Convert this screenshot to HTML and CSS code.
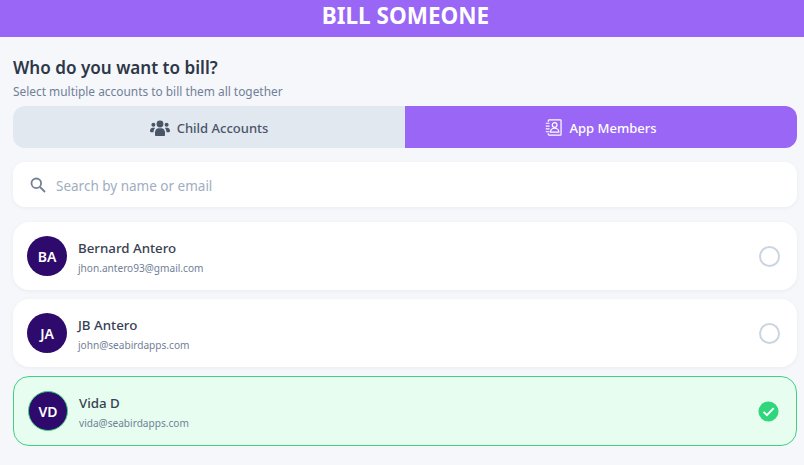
FILE: index.html
```html
<!DOCTYPE html>
<html lang="en">
<head>
  <meta charset="UTF-8">
  <meta name="viewport" content="width=device-width, initial-scale=1.0">
  <title>Bill Someone</title>
  <link rel="stylesheet" href="styles.css">
</head>
<body>
  <header class="top-bar">BILL SOMEONE</header>

  <main class="content">
    <h2 class="title">Who do you want to bill?</h2>
    <p class="subtitle">Select multiple accounts to bill them all together</p>

    <!-- Tabs -->
    <div class="tabs">
      <button class="tab">
        <svg class="tab-icon" viewBox="0 0 20 16" fill="currentColor">
          <circle cx="10" cy="4" r="3.4"/>
          <circle cx="3.4" cy="4.8" r="2"/>
          <circle cx="16.6" cy="4.8" r="2"/>
          <path d="M5 15v-2.6C5 10 6.6 8.3 8.6 8.3h2.8c2 0 3.6 1.7 3.6 4.1V15c0 .6-.4 1-1 1H6c-.6 0-1-.4-1-1z"/>
          <path d="M0 10.800C0 9.100 1.100 7.700 2.600 7.700h1.300c.5 0 .9.100 1.300.400C4.100 9.100 3.500 10.500 3.500 12.200H1C.4 12.200 0 11.700 0 11.100z"/>
          <path d="M20 10.800C20 9.100 18.900 7.700 17.400 7.700h-1.300c-.5 0-.9.100-1.300.400 1.100 1 1.700 2.400 1.700 4.100H19c.6 0 1-.5 1-1.100z"/>
        </svg>
        Child Accounts
      </button>
      <button class="tab active">
        <svg class="tab-icon app-icon" viewBox="0 0 18 18" fill="none" stroke="currentColor" stroke-width="1.300">
          <path d="M3.500 3V1.700c0-.4.300-.7.700-.7h12.100c.4 0 .7.300.7.700v14.600c0 .4-.3.700-.7.700H4.200c-.4 0-.7-.3-.7-.7V15"/>
          <circle cx="10.200" cy="6.400" r="2.500"/>
          <path d="M5.800 14c0-2.600 1.800-4.200 4.400-4.200s4.400 1.600 4.400 4.200z"/>
          <path d="M.8 4.500h4M.8 7.500h4M.8 10.500h4M.8 13.500h4"/>
        </svg>
        App Members
      </button>
    </div>

    <!-- Search -->
    <div class="search">
      <svg class="search-icon" viewBox="0 0 16 16" fill="none" stroke="currentColor" stroke-width="1.800">
        <circle cx="6.300" cy="6.300" r="4.800"/>
        <path d="M10 10l5 5"/>
      </svg>
      <input class="search-input" type="text" placeholder="Search by name or email">
    </div>

    <!-- Members -->
    <div class="member-list">
      <div class="member">
        <div class="avatar">BA</div>
        <div class="member-info">
          <div class="member-name">Bernard Antero</div>
          <div class="member-email">jhon.antero93@gmail.com</div>
        </div>
        <span class="radio"></span>
      </div>
      <div class="member">
        <div class="avatar">JA</div>
        <div class="member-info">
          <div class="member-name">JB Antero</div>
          <div class="member-email">john@seabirdapps.com</div>
        </div>
        <span class="radio"></span>
      </div>
      <div class="member selected">
        <div class="avatar">VD</div>
        <div class="member-info">
          <div class="member-name">Vida D</div>
          <div class="member-email">vida@seabirdapps.com</div>
        </div>
        <svg class="check" viewBox="0 0 22 22">
          <circle cx="11" cy="11" r="10.500" fill="#2fd67b"/>
          <path d="M5.800 11.400l3.600 3.500 7-7.400" fill="none" stroke="#fff" stroke-width="2"/>
        </svg>
      </div>
    </div>
  </main>
</body>
</html>
```

FILE: styles.css
```css
* {
  box-sizing: border-box;
}
body {
  margin: 0;
  background-color: #f5f7fb;
  font-family: "Noto Sans", "Open Sans", sans-serif;
  color: #2d3748;
}
.top-bar {
  height: 37px;
  padding-left: 7px;
  background-color: #9966f5;
  color: #fff;
  font-size: 22.500px;
  font-weight: 700;
  line-height: 32px;
  text-align: center;
}
.content {
  padding: 18px 7px 0 13px;
}
.title {
  margin: 0;
  font-size: 17.100px;
  font-weight: 600;
  line-height: 26px;
}
.subtitle {
  margin: 2px 0 0;
  font-size: 11.900px;
  line-height: 17px;
  color: #718096;
}
.tabs {
  display: flex;
  margin-top: 6px;
  height: 42px;
  border-radius: 12px;
  overflow: hidden;
}
.tab {
  flex: 1;
  display: flex;
  align-items: center;
  justify-content: center;
  gap: 7px;
  padding: 2px 0 0;
  border: none;
  background-color: #e2e8f0;
  color: #4a5568;
  font-family: inherit;
  font-size: 13px;
  font-weight: 500;
  cursor: pointer;
}
.tab.active {
  background-color: #9966f5;
  color: #fff;
}
.tab-icon {
  width: 20px;
  height: 16px;
  margin-top: -1px;
}
.app-icon {
  width: 17px;
  height: 17px;
}
.search {
  display: flex;
  align-items: center;
  gap: 10px;
  margin-top: 14px;
  height: 45px;
  padding: 0 17px;
  background-color: #fff;
  border-radius: 12px;
  box-shadow: 0 1px 4px rgba(0, 0, 0, 0.05);
}
.search-icon {
  width: 16px;
  height: 16px;
  color: #718096;
}
.search-input {
  flex: 1;
  border: none;
  outline: none;
  padding: 3px 0 0;
  background: none;
  font-family: inherit;
  font-size: 13.500px;
}
.search-input::placeholder {
  color: #a0aec0;
  opacity: 1;
}
.member-list {
  display: flex;
  flex-direction: column;
  gap: 9px;
  margin-top: 15px;
}
.member {
  display: flex;
  align-items: center;
  gap: 11px;
  height: 68px;
  padding: 0 17px 0 14px;
  background-color: #fff;
  border-radius: 16px;
  box-shadow: 0 1px 4px rgba(0, 0, 0, 0.05);
}
.member.selected {
  height: 70px;
  background-color: #e6fdf0;
  border: 1px solid #3fd283;
  box-shadow: none;
}
.avatar {
  display: flex;
  align-items: center;
  justify-content: center;
  flex-shrink: 0;
  width: 40px;
  height: 40px;
  border-radius: 50%;
  background-color: #2d0a6b;
  color: #fff;
  font-size: 14px;
  font-weight: 600;
}
.selected .avatar {
  border: 1px solid #3fd283;
}
.member-info {
  flex: 1;
  padding-top: 2px;
}
.member-name {
  font-size: 13.300px;
  font-weight: 500;
  line-height: 20px;
  color: #374151;
}
.member-email {
  margin-top: 2.500px;
  font-size: 10.100px;
  line-height: 16px;
  color: #718096;
}
.radio {
  width: 21px;
  height: 21px;
  border: 2.500px solid #cbd5e0;
  border-radius: 50%;
}
.check {
  width: 21px;
  height: 21px;
}
```
